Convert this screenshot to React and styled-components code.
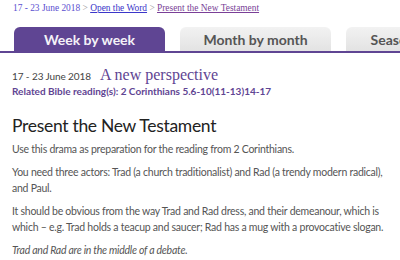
import React from 'react';
import styled, { createGlobalStyle } from 'styled-components';

const Global = createGlobalStyle`
  html, body { margin: 0; padding: 0; background: #fff; }
  body { overflow: hidden; width: 400px; height: 260px; }
`;

const Page = styled.div`
  font-family: "Lato", "Open Sans", sans-serif;
  color: #555;
`;

const Crumbs = styled.div`
  font-family: "Liberation Serif", serif;
  font-size: 9.4px;
  line-height: 14px;
  padding: 1px 13px 0;
  color: #9a9a9a;
  white-space: nowrap;
`;

const CrumbDate = styled.span`
  color: #5b4fd0;
`;

const CrumbLink = styled.a`
  color: ${p => (p.$visited ? '#7a3f97' : '#3b36c9')};
  text-decoration: underline;
`;

const Tabs = styled.div`
  display: flex;
  gap: 15px;
  margin-top: 12px;
  padding-left: 14px;
  border-bottom: 2px solid #5f4593;
  overflow: hidden;
  white-space: nowrap;
`;

const Tab = styled.div`
  flex: 0 0 ${p => p.$width || 151}px;
  height: 24px;
  border-radius: 6px 6px 0 0;
  display: flex;
  align-items: center;
  justify-content: center;
  font-size: 14px;
  font-weight: 700;
  background: ${p => (p.$active ? '#5f4593' : 'linear-gradient(#f2f2f2, #e3e3e3)')};
  color: ${p => (p.$active ? '#f4f2f8' : '#555')};
`;

const Content = styled.div`
  padding: 0 12px;
`;

const Header = styled.div`
  margin-top: 13px;
  display: flex;
  align-items: baseline;
  gap: 9px;
`;

const DateLabel = styled.span`
  font-size: 10px;
  letter-spacing: -0.1px;
  color: #444;
`;

const Perspective = styled.span`
  font-family: "Liberation Serif", serif;
  font-size: 16px;
  color: #5f4593;
`;

const Related = styled.div`
  font-size: 10px;
  font-weight: 700;
  line-height: 14px;
  color: #5f4593;
`;

const Title = styled.h1`
  font-size: 17.5px;
  font-weight: 400;
  letter-spacing: -0.3px;
  color: #222;
  margin: 16px 0 3px;
  line-height: 24px;
`;

const Para = styled.p`
  font-size: 10.5px;
  letter-spacing: -0.25px;
  line-height: 16px;
  margin: 0 0 7px;
  color: #555;
  font-style: ${p => (p.$italic ? 'italic' : 'normal')};
`;

export default function App() {
  return (
    <Page>
      <Global />
      <Crumbs>
        <CrumbDate>17 - 23 June 2018</CrumbDate> &gt; <CrumbLink href="#">Open the Word</CrumbLink> &gt;{' '}
        <CrumbLink href="#" $visited>Present the New Testament</CrumbLink>
      </Crumbs>
      <Tabs>
        <Tab $active>Week by week</Tab>
        <Tab>Month by month</Tab>
        <Tab $width={104}>Seasonal</Tab>
      </Tabs>
      <Content>
        <Header>
          <DateLabel>17 - 23 June 2018</DateLabel>
          <Perspective>A new perspective</Perspective>
        </Header>
        <Related>Related Bible reading(s): 2 Corinthians 5.6-10(11-13)14-17</Related>
        <Title>Present the New Testament</Title>
        <Para>Use this drama as preparation for the reading from 2 Corinthians.</Para>
        <Para>You need three actors: Trad (a church traditionalist) and Rad (a trendy modern radical), and Paul.</Para>
        <Para>It should be obvious from the way Trad and Rad dress, and their demeanour, which is which – e.g. Trad holds a teacup and saucer; Rad has a mug with a provocative slogan.</Para>
        <Para $italic>Trad and Rad are in the middle of a debate.</Para>
      </Content>
    </Page>
  );
}
